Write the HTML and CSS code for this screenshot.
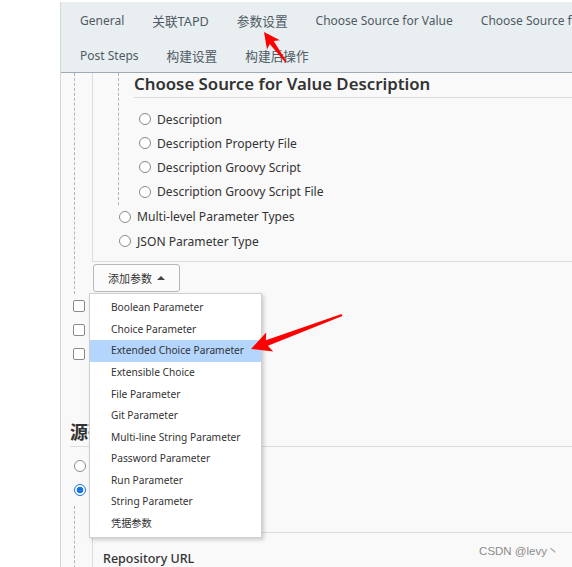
FILE: index.html
```html
<!DOCTYPE html>
<html lang="zh-CN">
<head>
<meta charset="utf-8">
<title>Jenkins 配置</title>
<link rel="stylesheet" href="styles.css">
</head>
<body>
<div class="page">
  <div class="gutter"></div>
  <div class="main">
    <nav class="tabs">
      <div class="tab-row">
        <a class="tab">General</a>
        <a class="tab cjk">关联TAPD</a>
        <a class="tab cjk">参数设置</a>
        <a class="tab">Choose Source for Value</a>
        <a class="tab">Choose Source for Value Description</a>
      </div>
      <div class="tab-row">
        <a class="tab">Post Steps</a>
        <a class="tab cjk">构建设置</a>
        <a class="tab cjk">构建后操作</a>
      </div>
    </nav>

    <div class="content">
      <div class="param-block">
        <div class="param-box">
          <div class="nested">
            <h3 class="sub-heading">Choose Source for Value Description</h3>
            <ul class="radio-list first-list">
              <li><input type="radio" class="radio" name="desc"><span>Description</span></li>
              <li><input type="radio" class="radio" name="desc"><span>Description Property File</span></li>
              <li><input type="radio" class="radio" name="desc"><span>Description Groovy Script</span></li>
              <li><input type="radio" class="radio" name="desc"><span>Description Groovy Script File</span></li>
            </ul>
          </div>
          <ul class="radio-list outer-list">
            <li><input type="radio" class="radio" name="ptype"><span>Multi-level Parameter Types</span></li>
            <li><input type="radio" class="radio" name="ptype"><span>JSON Parameter Type</span></li>
          </ul>
        </div>
        <div class="add-wrap">
          <button class="add-btn" type="button">添加参数 <span class="caret"></span></button>
          <ul class="menu">
            <li>Boolean Parameter</li>
            <li>Choice Parameter</li>
            <li class="active">Extended Choice Parameter</li>
            <li>Extensible Choice</li>
            <li>File Parameter</li>
            <li>Git Parameter</li>
            <li>Multi-line String Parameter</li>
            <li>Password Parameter</li>
            <li>Run Parameter</li>
            <li>String Parameter</li>
            <li>凭据参数</li>
          </ul>
        </div>
      </div>

      <ul class="check-list">
        <li><input type="checkbox" class="check"></li>
        <li><input type="checkbox" class="check"></li>
        <li><input type="checkbox" class="check"></li>
      </ul>

      <h2 class="section-heading">源码管理</h2>
      <ul class="radio-list scm-list">
        <li><input type="radio" class="radio" name="scm"></li>
        <li><input type="radio" class="radio" name="scm" checked></li>
      </ul>

      <div class="scm-block">
        <div class="scm-box">
          <div class="field-label">Repository URL</div>
        </div>
      </div>
    </div>
  </div>

  <svg class="annotations" width="572" height="567" viewBox="0 0 572 567">
    <polygon fill="#ff0000" points="264,32 279.9,40.2 273.7,41.0 286.6,61.6 285.4,62.4 269.7,44.0 267.0,49.6"/>
    <polygon fill="#ff0000" points="251,349 266.2,332.6 265.9,340.2 341.6,314.1 342.4,315.9 267.9,345.8 273.2,351.4"/>
  </svg>
  <div class="watermark">CSDN @levy丶</div>
</div>
</body>
</html>
```

FILE: styles.css
```css
* { box-sizing: border-box; }

html, body {
  margin: 0;
  padding: 0;
  background: #ffffff;
}

body {
  font-family: "Noto Sans", "Noto Sans CJK SC", sans-serif;
  font-size: 12px;
  color: #333333;
  width: 572px;
  height: 567px;
  overflow: hidden;
}

.page {
  position: relative;
  display: flex;
  width: 572px;
  height: 567px;
  overflow: hidden;
}

.gutter {
  width: 60px;
  flex: none;
  background: #ffffff;
}

.main {
  flex: 1;
  margin-top: 2px;
  border-left: 1px solid #d4d6d8;
  background: #f9f9f9;
  overflow: hidden;
  min-width: 0;
}

/* tabs */
.tabs {
  background: #e9eef1;
  border-bottom: 1px solid #9eabb2;
  padding-left: 19px;
  padding-top: 1px;
}

.tab-row {
  display: flex;
  gap: 28px;
  height: 35px;
  align-items: center;
  white-space: nowrap;
}

.tab-row + .tab-row {
  height: 34px;
}

.tab {
  font-size: 12px;
  color: #4f5b63;
  flex: none;
}

.tab.cjk {
  font-size: 12.7px;
}

/* content */
.content {
  padding-left: 13px;
}

.param-block {
  border-left: 1px dashed #b5b5b5;
  padding-left: 17px;
  padding-bottom: 2px;
}

.param-box {
  border-left: 1px solid #dcdcdc;
  border-bottom: 1px solid #dcdcdc;
  padding-left: 25px;
  padding-bottom: 8px;
}

.nested {
  border-left: 1px dashed #b5b5b5;
  padding-left: 15px;
  padding-bottom: 1px;
}

.sub-heading {
  margin: 0;
  font-size: 16.8px;
  font-weight: 600;
  line-height: 22px;
  color: #333333;
  padding-bottom: 2px;
  border-bottom: 1px solid #dddddd;
  white-space: nowrap;
}

.radio-list {
  list-style: none;
  margin: 0;
  padding: 0;
}

.radio-list li {
  display: flex;
  align-items: center;
  height: 24.2px;
  gap: 6px;
  white-space: nowrap;
  font-size: 12.1px;
  color: #333333;
}

.first-list {
  margin-top: 9px;
  padding-left: 5px;
}

.outer-list {
  padding-left: 1px;
}

.radio {
  appearance: none;
  -webkit-appearance: none;
  width: 12px;
  height: 12px;
  margin: 0;
  border: 1px solid #8a8a8a;
  border-radius: 50%;
  background: #ffffff;
  flex: none;
}

.radio:checked {
  border-color: #1a73e8;
  background: radial-gradient(circle, #1a73e8 0 3.2px, #ffffff 3.6px);
}

/* add button + menu */
.add-wrap {
  position: relative;
  margin-top: 2px;
  padding-left: 1px;
}

.add-btn {
  display: flex;
  align-items: center;
  justify-content: center;
  gap: 5px;
  width: 87px;
  height: 28px;
  border: 1px solid #b8b8b8;
  border-radius: 3px;
  background: #fbfbfb;
  font-family: "Noto Sans CJK SC", "Noto Sans", sans-serif;
  font-size: 11px;
  color: #333333;
  padding: 0;
}

.caret {
  width: 0;
  height: 0;
  border-left: 4px solid transparent;
  border-right: 4px solid transparent;
  border-bottom: 4px solid #444444;
}

.menu {
  position: absolute;
  top: 29px;
  left: -3px;
  width: 173px;
  margin: 0;
  padding: 3px 0 2px;
  list-style: none;
  background: #ffffff;
  border: 1px solid #d0d0d0;
  box-shadow: 2px 2px 4px rgba(0, 0, 0, 0.18);
  z-index: 2;
}

.menu li {
  height: 21.6px;
  line-height: 21.6px;
  padding-left: 21px;
  font-size: 10.2px;
  color: #333333;
  white-space: nowrap;
}

.menu li.active {
  background: #b4d5fd;
}

/* checkboxes */
.check-list {
  list-style: none;
  margin: 0;
  padding: 0;
}

.check-list li {
  height: 24px;
  display: flex;
  align-items: center;
}

.check {
  appearance: none;
  -webkit-appearance: none;
  width: 12px;
  height: 12px;
  margin: 0 0 0 -1px;
  border: 1px solid #8a8a8a;
  border-radius: 2px;
  background: #ffffff;
}

/* section */
.section-heading {
  margin: 53px 0 0 -4px;
  font-family: "Noto Sans CJK SC", sans-serif;
  font-size: 18px;
  font-weight: 700;
  line-height: 24px;
  padding-bottom: 3px;
  border-bottom: 1px solid #dddddd;
  color: #333333;
}

.scm-list {
  margin-top: 7px;
}

.scm-block {
  margin-top: 3px;
  border-left: 1px dashed #b5b5b5;
  padding-left: 17px;
  padding-top: 26px;
}

.scm-box {
  border-left: 1px solid #dcdcdc;
  border-top: 1px solid #dcdcdc;
  padding: 17px 0 20px 10px;
}

.field-label {
  font-size: 12.5px;
  line-height: 18px;
  font-weight: 500;
  color: #333333;
}

/* overlays */
.annotations {
  position: absolute;
  left: 0;
  top: 0;
  pointer-events: none;
  z-index: 5;
}

.watermark {
  position: absolute;
  right: 14px;
  bottom: 9px;
  font-family: "Liberation Sans", Arial, sans-serif;
  font-size: 11.5px;
  color: #8c8c8c;
  z-index: 6;
}
```
